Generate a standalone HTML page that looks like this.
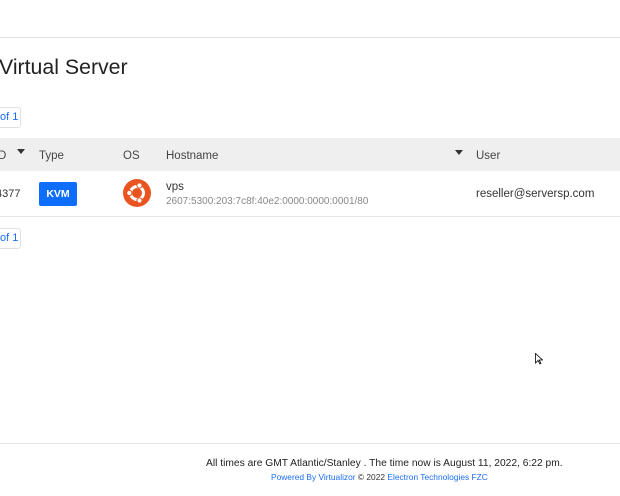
<!DOCTYPE html>
<html><head><meta charset="utf-8"><style>
*{margin:0;padding:0;box-sizing:border-box}
body{width:620px;height:496px;overflow:hidden;background:#fff;font-family:"Liberation Sans",sans-serif;color:#333;position:relative}
.a{position:absolute;white-space:nowrap}
.pg{position:absolute;left:-12px;width:33px;height:21px;border:1px solid #dee2e6;border-radius:3px;color:#1a6ef5;font-size:11px;line-height:19px;padding-left:11px;background:#fff}
.h{font-size:11.5px;color:#444;top:150px}
.arr{width:0;height:0;border-left:4px solid transparent;border-right:4px solid transparent;border-top:5px solid #333;position:absolute}
</style></head><body>
<div class="a" style="left:0;top:37px;width:620px;border-top:1px solid #e3e3e3"></div>
<div class="a" style="left:-1px;top:55px;font-size:21.3px;color:#222">Virtual Server</div>
<div class="pg" style="top:107px">of 1</div>
<div class="a" style="left:0;top:138px;width:620px;height:33px;background:#efefef"></div>
<div class="a h" style="left:-2px">D</div>
<div class="arr" style="left:17px;top:149px"></div>
<div class="a h" style="left:39px">Type</div>
<div class="a h" style="left:123px">OS</div>
<div class="a h" style="left:166px">Hostname</div>
<div class="arr" style="left:455px;top:150px"></div>
<div class="a h" style="left:476px">User</div>
<div class="a" style="left:-4px;top:188px;font-size:11px">4377</div>
<div class="a" style="left:39px;top:182px;width:38px;height:24px;background:#0d6efd;border-radius:2px;color:#fff;font-size:10.5px;font-weight:bold;text-align:center;line-height:24px">KVM</div>
<svg class="a" style="left:123px;top:179px" width="28" height="28" viewBox="0 0 28 28">
<circle cx="14" cy="14" r="14" fill="#e95420"/>
<circle cx="14" cy="14" r="6.5" fill="none" stroke="#fff" stroke-width="3"/>
<circle cx="16.5" cy="6.5" r="2.6" fill="#fff" stroke="#e95420" stroke-width="1"/>
<circle cx="6.3" cy="14" r="2.6" fill="#fff" stroke="#e95420" stroke-width="1"/>
<circle cx="16.5" cy="21.5" r="2.6" fill="#fff" stroke="#e95420" stroke-width="1"/>
</svg>
<div class="a" style="left:166px;top:181px;font-size:11.5px;color:#333">vps</div>
<div class="a" style="left:166px;top:196px;font-size:10px;color:#888">2607:5300:203:7c8f:40e2:0000:0000:0001/80</div>
<div class="a" style="left:476px;top:188px;font-size:11.5px;color:#333">reseller@serversp.com</div>
<div class="a" style="left:0;top:216px;width:620px;border-top:1px solid #e8e8e8"></div>
<div class="pg" style="top:228px">of 1</div>
<svg class="a" style="left:535px;top:353px" width="8" height="12" viewBox="0 0 8 12"><path d="M0.5 0.5 L0.5 10 L3 7.5 L5 11 L6 10.5 L4.2 7 L7.5 7 Z" fill="#fff" stroke="#000" stroke-width="0.8"/></svg>
<div class="a" style="left:0;top:443px;width:620px;border-top:1px solid #e3e3e3"></div>
<div class="a" style="left:206px;top:458px;font-size:10.25px;color:#222">All times are GMT Atlantic/Stanley . The time now is August 11, 2022, 6:22 pm.</div>
<div class="a" style="left:271px;top:472px;font-size:8.4px;color:#333"><span style="color:#1a6ef5">Powered By Virtualizor</span> © 2022 <span style="color:#1a6ef5">Electron Technologies FZC</span></div>
</body></html>
